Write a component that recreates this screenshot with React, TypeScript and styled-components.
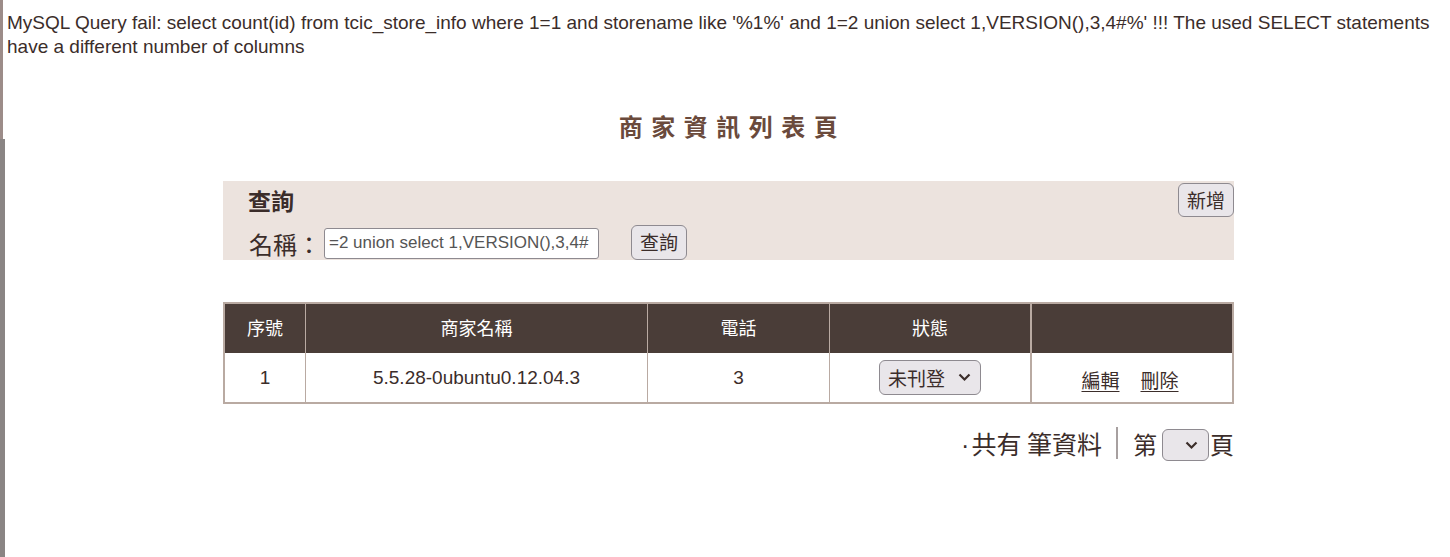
import React from "react";
import styled, { createGlobalStyle } from "styled-components";

const Global = createGlobalStyle`
  html, body { margin: 0; padding: 0; background: #fff; }
  body {
    font-family: "Liberation Sans", "Noto Sans CJK TC", sans-serif;
    color: #3b2d2a;
    min-height: 557px;
    background:
      linear-gradient(#9c8c89, #9c8c89) 0 0 / 3px 139px no-repeat,
      linear-gradient(#8a8584, #8a8584) 0 139px / 5px 100% no-repeat,
      #fff;
  }
`;

const Page = styled.div`
  padding: 0 0 40px 7px;
`;

const ErrorText = styled.div`
  font-size: 19px;
  line-height: 24px;
  padding-top: 11px;
  color: #3b2d2a;
  padding-right: 10px;
`;

const Title = styled.h1`
  margin: 52px 0 0;
  text-align: center;
  font-size: 24px;
  line-height: 30px;
  font-weight: bold;
  letter-spacing: 8.5px;
  color: #6a4a3c;
  font-family: "Noto Sans CJK TC", sans-serif;
  padding-left: 8px;
`;

const Content = styled.div`
  width: 1011px;
  margin: 0 auto;
`;

const SearchPanel = styled.div`
  margin-top: 40px;
  background: #ece3de;
  height: 79px;
  display: flex;
  flex-direction: column;
  padding: 0 0 0 25px;
  box-sizing: border-box;
`;

const PanelTop = styled.div`
  display: flex;
  justify-content: space-between;
  align-items: flex-start;
  height: 43px;
  padding-top: 2px;
  box-sizing: border-box;
`;

const PanelHeading = styled.div`
  font-family: "Noto Sans CJK TC", sans-serif;
  font-weight: bold;
  font-size: 23px;
  line-height: 34px;
  color: #3b2d2a;
`;

const Button = styled.button<{ h: number }>`
  font-family: "Noto Sans CJK TC", sans-serif;
  font-size: 19px;
  line-height: 24px;
  color: #3b2d2a;
  background: #e9e6ea;
  border: 1px solid #8e8a90;
  border-radius: 6px;
  padding: 3px 8px;
  height: ${(p) => p.h}px;
  cursor: pointer;
`;

const PanelRow = styled.div`
  display: flex;
  align-items: center;
  height: 36px;
`;

const Label = styled.span`
  font-family: "Noto Sans CJK TC", sans-serif;
  font-size: 24px;
  color: #3b2d2a;
  padding-left: 1px;
  width: 75px;
  margin-top: 2px;
`;

const TextInput = styled.input`
  width: 275px;
  height: 31px;
  box-sizing: border-box;
  border: 1px solid #8e8a90;
  border-radius: 3px;
  background: #fff;
  font-family: "Liberation Sans", sans-serif;
  font-size: 17px;
  color: #555;
  padding: 0 4px;
  margin-right: 32px;
  margin-top: 2px;
`;

const Table = styled.table`
  margin-top: 42px;
  width: 1011px;
  border-collapse: collapse;
  border: 2px solid #b9aaa2;
  font-size: 19px;
`;

const Th = styled.th<{ thick?: boolean; w?: number }>`
  background: #4a3d38;
  color: #fff;
  font-weight: normal;
  font-family: "Noto Sans CJK TC", sans-serif;
  font-size: 18px;
  height: 46px;
  padding: 0 0 3px;
  border-left: ${(p) => (p.thick ? "2px" : "1px")} solid #b9aaa2;
  width: ${(p) => (p.w ? `${p.w}px` : "auto")};
`;

const Td = styled.td<{ thick?: boolean }>`
  height: 49px;
  padding: 0;
  text-align: center;
  color: #3b2d2a;
  font-size: 19px;
  border-left: ${(p) => (p.thick ? "2px" : "1px")} solid #b9aaa2;
`;

const StatusSelect = styled.div`
  display: inline-flex;
  align-items: center;
  gap: 13px;
  height: 35px;
  box-sizing: border-box;
  padding: 0 9px 0 8px;
  border: 1px solid #8e8a90;
  border-radius: 6px;
  background: #e9e6ea;
  font-family: "Noto Sans CJK TC", sans-serif;
  font-size: 19px;
  color: #3b2d2a;
  vertical-align: middle;
`;

const Chevron = () => (
  <svg width="13" height="9" viewBox="0 0 13 9">
    <path d="M1.5 1.5 L6.5 6.5 L11.5 1.5" fill="none" stroke="#3b2d2a" strokeWidth="2.2" />
  </svg>
);

const Links = styled.div`
  display: flex;
  justify-content: center;
  gap: 21px;
  padding-top: 3px;
  padding-right: 4px;
`;

const ActionLink = styled.a`
  font-family: "Noto Sans CJK TC", sans-serif;
  font-size: 19px;
  color: #3b2d2a;
  text-decoration: underline;
  text-underline-offset: 3px;
  cursor: pointer;
`;

const Pager = styled.div`
  display: flex;
  justify-content: flex-end;
  align-items: center;
  margin-top: 22px;
  font-family: "Noto Sans CJK TC", sans-serif;
  font-size: 24px;
  color: #3b2d2a;
  height: 34px;
`;

const Summary = styled.span`
  font-size: 25px;
`;

const Dot = styled.span`
  font-family: "Liberation Sans", sans-serif;
  margin-right: 2px;
`;

const Divider = styled.span`
  width: 2px;
  height: 32px;
  background: #a7a0a0;
  margin: 0 15px 0 14px;
`;

const PageSelect = styled.div`
  width: 47px;
  height: 32px;
  box-sizing: border-box;
  border: 1px solid #8e8a90;
  border-radius: 6px;
  background: #e9e6ea;
  display: flex;
  align-items: center;
  justify-content: flex-end;
  padding-right: 10px;
  margin: 4px 1px 0 5px;
`;

export default function App() {
  return (
    <>
      <Global />
      <Page>
        <ErrorText>
          MySQL Query fail: select count(id) from tcic_store_info where 1=1 and storename like '%1%' and 1=2 union select 1,VERSION(),3,4#%' !!! The used SELECT statements have a different number of columns
        </ErrorText>
        <Title>商家資訊列表頁</Title>
        <Content>
          <SearchPanel>
            <PanelTop>
              <PanelHeading>查詢</PanelHeading>
              <Button h={34}>新增</Button>
            </PanelTop>
            <PanelRow>
              <Label>名稱：</Label>
              <TextInput readOnly value="=2 union select 1,VERSION(),3,4#" />
              <Button h={35}>查詢</Button>
            </PanelRow>
          </SearchPanel>
          <Table>
            <thead>
              <tr>
                <Th w={80}>序號</Th>
                <Th w={341}>商家名稱</Th>
                <Th w={181}>電話</Th>
                <Th w={200}>狀態</Th>
                <Th thick></Th>
              </tr>
            </thead>
            <tbody>
              <tr>
                <Td>1</Td>
                <Td>5.5.28-0ubuntu0.12.04.3</Td>
                <Td>3</Td>
                <Td>
                  <StatusSelect>
                    未刊登 <Chevron />
                  </StatusSelect>
                </Td>
                <Td thick>
                  <Links>
                    <ActionLink>編輯</ActionLink>
                    <ActionLink>刪除</ActionLink>
                  </Links>
                </Td>
              </tr>
            </tbody>
          </Table>
          <Pager>
            <Summary>
              <Dot>·</Dot>共有 筆資料
            </Summary>
            <Divider />
            <span>第</span>
            <PageSelect>
              <Chevron />
            </PageSelect>
            <span>頁</span>
          </Pager>
        </Content>
      </Page>
    </>
  );
}
